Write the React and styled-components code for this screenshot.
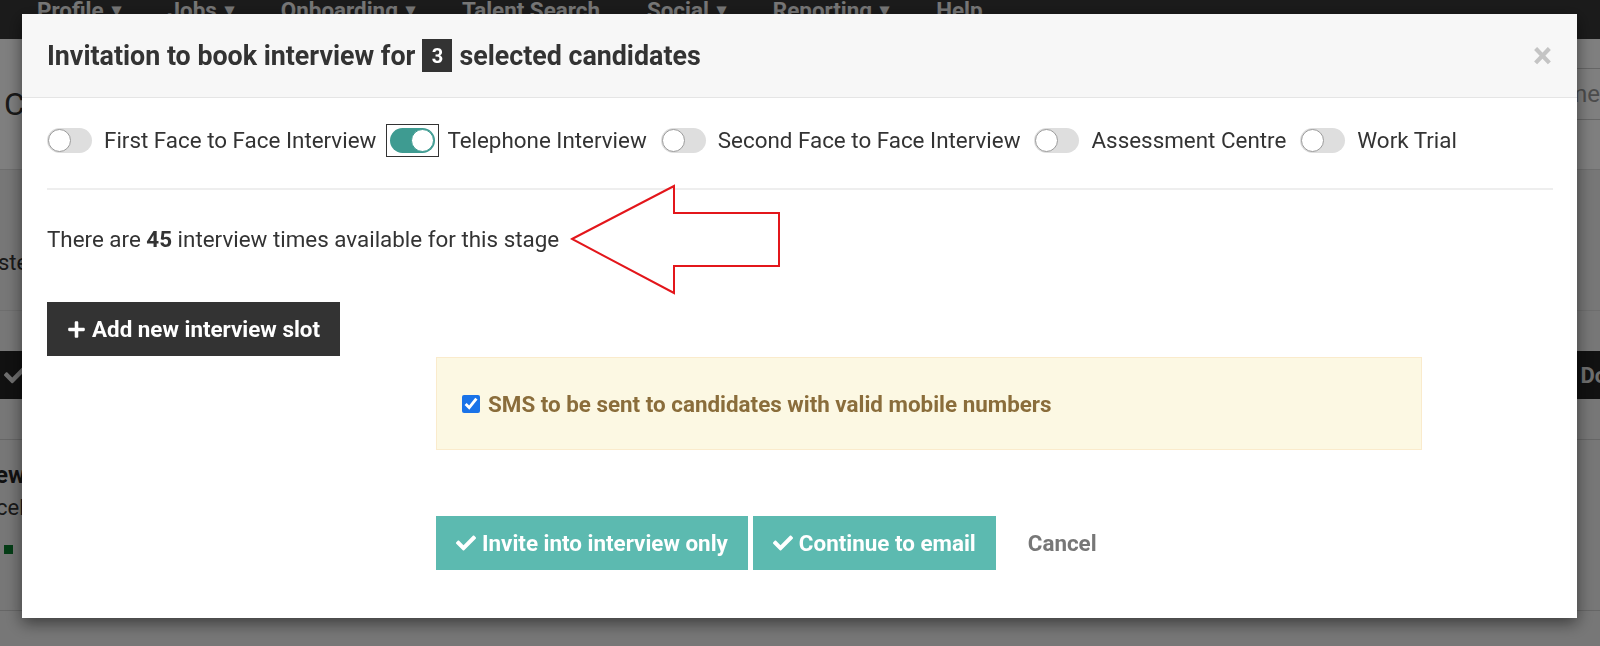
import React, { useState } from "react"
import styled, { createGlobalStyle } from "styled-components"
import { FaCheck, FaPlus } from "react-icons/fa"

const Global = createGlobalStyle`
  body {
    margin: 0;
    background: #eeeeee;
    font-family: Roboto, "Liberation Sans", sans-serif;
    overflow: hidden;
  }
`

/* ---------- page behind the modal ---------- */

const Page = styled.div`
  height: 646px;
  overflow: hidden;
  background: #eeeeee;
`

const NavBar = styled.div`
  height: 59px;
  margin-top: -20px;
  background: #373737;
  display: flex;
  align-items: center;
  gap: 47px;
  padding-left: 37px;
`

const NavItem = styled.div`
  color: #eeeeee;
  font-size: 22.4px;
  font-weight: 700;
  display: flex;
  align-items: center;
  gap: 8px;
  &::after {
    content: ${(p) => (p.$menu ? '"▾"' : "none")};
    font-size: 18px;
  }
`

const PageHead = styled.div`
  height: 130px;
  background: #ffffff;
  border-bottom: 1px solid #dddddd;
  display: flex;
  align-items: center;
  justify-content: space-between;
  padding-left: 4px;
`

const PageTitle = styled.div`
  font-size: 32px;
  color: #333333;
`

const Search = styled.div`
  width: 220px;
  height: 50px;
  border-top: 1px solid #cccccc;
  border-bottom: 1px solid #cccccc;
  display: flex;
  align-items: center;
  justify-content: flex-end;
  color: #999999;
  font-size: 24px;
  margin-top: -20px;
`

const FilterRow = styled.div`
  height: 140px;
  display: flex;
  align-items: center;
  border-bottom: 1px solid #dddddd;
`

const FilterLabel = styled.div`
  font-size: 22px;
  color: #333333;
  margin-left: -2px;
  margin-top: 44px;
`

const Toolbar = styled.div`
  height: 128px;
  display: flex;
  align-items: center;
  justify-content: space-between;
  border-bottom: 1px solid #cccccc;
  margin-right: -96px;
`

const DarkBtn = styled.div`
  height: 48px;
  background: #222222;
  color: #dddddd;
  font-size: 22px;
  font-weight: 700;
  display: flex;
  align-items: center;
  padding: 0 18px 0 4px;
`

const ListItem = styled.div`
  height: 149px;
  padding-top: 21px;
  display: flex;
  flex-direction: column;
  gap: 6px;
  border-bottom: 1px solid #cccccc;
`

const ItemTitle = styled.div`
  font-size: 24px;
  line-height: 28px;
  font-weight: 700;
  color: #222222;
  margin-left: -22px;
`

const ItemText = styled.div`
  font-size: 22px;
  line-height: 26px;
  color: #333333;
  margin-left: -4px;
`

const Square = styled.div`
  width: 9px;
  height: 9px;
  background: #0a7a2c;
  margin: 18px 0 0 4px;
`

const Backdrop = styled.div`
  position: fixed;
  inset: 0;
  background: rgba(0, 0, 0, 0.5);
`

/* ---------- modal ---------- */

const Modal = styled.div`
  position: fixed;
  top: 14px;
  left: 22px;
  width: 1555px;
  background: #ffffff;
  box-shadow: 0 5px 15px rgba(0, 0, 0, 0.5);
  color: #333333;
`

const ModalHead = styled.div`
  height: 83px;
  background: #f7f7f7;
  border-bottom: 1px solid #e5e5e5;
  display: flex;
  align-items: center;
  justify-content: space-between;
  padding: 0 25px;
`

const Title = styled.h4`
  margin: 0;
  font-size: 26.8px;
  font-weight: 700;
  display: flex;
  align-items: center;
  gap: 7px;
`

const Badge = styled.span`
  background: #333333;
  color: #ffffff;
  font-size: 20px;
  width: 30px;
  height: 33px;
  display: inline-flex;
  align-items: center;
  justify-content: center;
`

const Close = styled.button`
  border: 0;
  background: none;
  padding: 0;
  font-size: 36px;
  font-weight: 700;
  color: #c4c4c4;
  line-height: 1;
  cursor: pointer;
  font-family: inherit;
`

const ModalBody = styled.div`
  padding: 30px 24px 48px 25px;
`

const StageRow = styled.div`
  display: flex;
  align-items: center;
  height: 24px;
  padding-bottom: 36px;
  border-bottom: 2px solid #eeeeee;
`

const Stage = styled.label`
  display: inline-flex;
  align-items: center;
  gap: 12px;
  margin-right: 14px;
  font-size: 22.4px;
  cursor: pointer;
`

const Toggle = styled.span`
  width: 45px;
  height: 25px;
  border-radius: 13px;
  background: ${(p) => (p.$on ? "#3e9b91" : "#dedede")};
  position: relative;
  flex-shrink: 0;
  &::before {
    content: "";
    display: ${(p) => (p.$focus ? "block" : "none")};
    position: absolute;
    inset: -4px;
    border: 1px solid #333333;
  }
  &::after {
    content: "";
    position: absolute;
    top: 1px;
    left: ${(p) => (p.$on ? "21px" : "1px")};
    width: 23px;
    height: 23px;
    border-radius: 50%;
    background: #ffffff;
    border: 1px solid ${(p) => (p.$on ? "#3e9b91" : "#9a9a9a")};
    box-sizing: border-box;
  }
`

const InfoRow = styled.div`
  display: flex;
  align-items: center;
  height: 98px;
`

const InfoText = styled.p`
  margin: 0;
  font-size: 22.4px;
`

const Arrow = styled.svg`
  margin-left: 11px;
  flex-shrink: 0;
`

const AddBtn = styled.button`
  height: 54px;
  padding: 0 20px;
  border: 0;
  background: #333333;
  color: #ffffff;
  font-family: inherit;
  font-size: 22.4px;
  font-weight: 700;
  display: flex;
  align-items: center;
  gap: 6px;
  margin-top: 14px;
  cursor: pointer;
`

const Actions = styled.div`
  margin-left: 389px;
  width: 986px;
  margin-top: 1px;
`

const Alert = styled.label`
  height: 93px;
  box-sizing: border-box;
  background: #fcf8e3;
  border: 1px solid #faebcc;
  color: #8a6d3b;
  font-size: 22.4px;
  font-weight: 700;
  display: flex;
  align-items: center;
  gap: 8px;
  padding-left: 25px;
`

const Check = styled.input`
  width: 18px;
  height: 18px;
  margin: 0;
  accent-color: #1a73e8;
`

const BtnRow = styled.div`
  display: flex;
  align-items: center;
  gap: 5px;
  margin-top: 66px;
`

const TealBtn = styled.button`
  height: 54px;
  padding: 0 20px;
  border: 0;
  background: #5cbab0;
  color: #ffffff;
  font-family: inherit;
  font-size: 22.4px;
  font-weight: 700;
  display: flex;
  align-items: center;
  gap: 6px;
  cursor: pointer;
`

const CancelBtn = styled.button`
  border: 0;
  background: none;
  color: #777777;
  font-family: inherit;
  font-size: 22.4px;
  font-weight: 700;
  margin-left: 21px;
  cursor: pointer;
`

const navItems = [
  ["Profile", true],
  ["Jobs", true],
  ["Onboarding", true],
  ["Talent Search", false],
  ["Social", true],
  ["Reporting", true],
  ["Help", false],
]

const stages = [
  "First Face to Face Interview",
  "Telephone Interview",
  "Second Face to Face Interview",
  "Assessment Centre",
  "Work Trial",
]

export default function App() {
  const [active, setActive] = useState(1)
  const [sms, setSms] = useState(true)

  return (
    <>
      <Global />
      <Page>
        <NavBar>
          {navItems.map(([name, menu]) => (
            <NavItem key={name} $menu={menu}>
              {name}
            </NavItem>
          ))}
        </NavBar>
        <PageHead>
          <PageTitle>Candidates</PageTitle>
          <Search>Name</Search>
        </PageHead>
        <FilterRow>
          <FilterLabel>steps</FilterLabel>
        </FilterRow>
        <Toolbar>
          <DarkBtn>
            <FaCheck />
          </DarkBtn>
          <DarkBtn>Download</DarkBtn>
        </Toolbar>
        <ListItem>
          <ItemTitle>New</ItemTitle>
          <ItemText>cel</ItemText>
          <Square />
        </ListItem>
      </Page>
      <Backdrop />

      <Modal>
        <ModalHead>
          <Title>
            Invitation to book interview for <Badge>3</Badge> selected candidates
          </Title>
          <Close>×</Close>
        </ModalHead>
        <ModalBody>
          <StageRow>
            {stages.map((s, i) => (
              <Stage key={s} onClick={() => setActive(i)}>
                <Toggle $on={active === i} $focus={active === i} />
                {s}
              </Stage>
            ))}
          </StageRow>

          <InfoRow>
            <InfoText>
              There are <b>45</b> interview times available for this stage
            </InfoText>
            <Arrow width="212" height="111" viewBox="0 0 212 111">
              <polygon
                points="2,55 104,2 104,29 209,29 209,82 104,82 104,109"
                fill="none"
                stroke="#e3161b"
                strokeWidth="2"
              />
            </Arrow>
          </InfoRow>

          <AddBtn>
            <FaPlus size={19} /> Add new interview slot
          </AddBtn>

          <Actions>
            <Alert>
              <Check
                type="checkbox"
                checked={sms}
                onChange={(e) => setSms(e.target.checked)}
              />
              SMS to be sent to candidates with valid mobile numbers
            </Alert>
            <BtnRow>
              <TealBtn>
                <FaCheck size={20} /> Invite into interview only
              </TealBtn>
              <TealBtn>
                <FaCheck size={20} /> Continue to email
              </TealBtn>
              <CancelBtn>Cancel</CancelBtn>
            </BtnRow>
          </Actions>
        </ModalBody>
      </Modal>
    </>
  )
}
